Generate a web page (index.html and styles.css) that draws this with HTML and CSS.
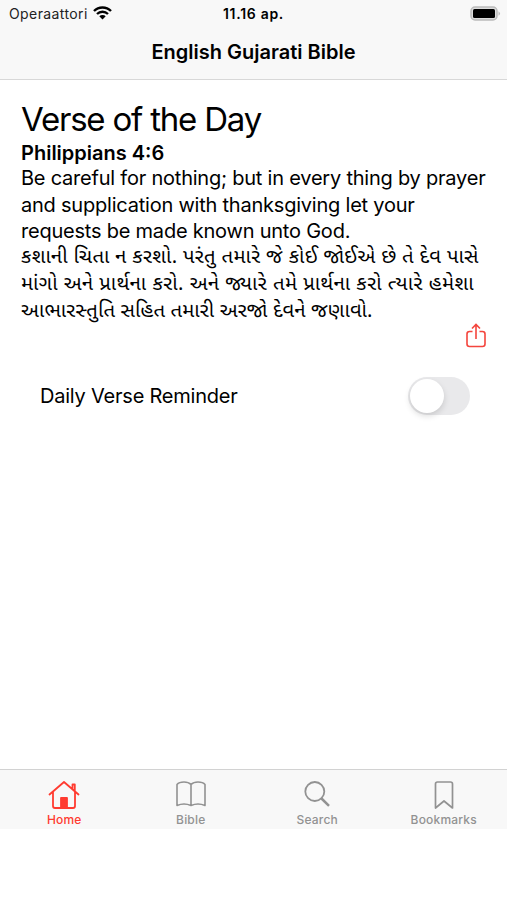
FILE: index.html
```html
<!DOCTYPE html>
<html lang="en">
<head>
  <meta charset="UTF-8">
  <title>English Gujarati Bible</title>
  <link rel="stylesheet" href="styles.css">
</head>
<body>
  <header>
    <div class="status">
      <span class="carrier">Operaattori</span>
      <svg class="wifi" width="19" height="14" viewBox="0 0 19 14">
        <path d="M1 5a12 12 0 0 1 17 0M4 8a8 8 0 0 1 11 0" fill="none" stroke="#000" stroke-width="2.4"/>
        <path d="M6.3 10.2a4.6 4.6 0 0 1 6.4 0L9.500 13.500z"/>
      </svg>
      <span class="time">11.16 ap.</span>
      <svg class="battery" width="31" height="15" viewBox="0 0 31 15">
        <rect x="1" y="1" width="26" height="13" rx="4" fill="#ddd" stroke="#bbb" stroke-width="1.500"/>
        <rect x="3" y="3" width="22" height="9" rx="1.500"/>
        <path d="M28.500 5.200q3 2.300 0 4.600z" fill="#bbb"/>
      </svg>
    </div>
    <h1>English Gujarati Bible</h1>
  </header>

  <main>
    <h2>Verse of the Day</h2>
    <h3>Philippians 4:6</h3>
    <div class="english">
      <p>Be careful for nothing; but in every thing by prayer</p>
      <p>and supplication with thanksgiving let your</p>
      <p>requests be made known unto God.</p>
    </div>
    <div class="gujarati" lang="gu">
      <p>કશાની ચિતા ન કરશો. પરંતુ તમારે જે કોઈ જોઈએ છે તે દેવ પાસે</p>
      <p class="wide">માંગો અને પ્રાર્થના કરો. અને જ્યારે તમે પ્રાર્થના કરો ત્યારે હમેશા</p>
      <p class="tight">આભારસ્તુતિ સહિત તમારી અરજો દેવને જણાવો.</p>
    </div>
    <div class="share">
      <svg width="20" height="25" viewBox="0 0 20 25" fill="none" stroke="#f4453d" stroke-width="1.600">
        <path d="M6.500 8.500H3.500Q1 8.500 1 11V21Q1 23.500 3.500 23.500H16.500Q19 23.500 19 21V11Q19 8.500 16.500 8.500H13.500M10 16V1.500M6 5.500L10 1.500L14 5.500"/>
      </svg>
    </div>
    <div class="reminder">
      <span>Daily Verse Reminder</span>
      <div class="switch"></div>
    </div>
  </main>

  <nav>
    <a class="active">
      <svg width="32" height="30" viewBox="0 0 32 30" fill="none" stroke="#ff3b30" stroke-width="1.800" stroke-linejoin="round" stroke-linecap="round">
        <path d="M1.500 14.500L16 2L30.500 14.500M5 12V26Q5 28 7 28H25Q27 28 27 26V12M24.500 9V4.500H26.800V11"/>
        <path d="M13 27.500V18H19V27.500z" fill="#ff3b30"/>
      </svg>
      <span>Home</span>
    </a>
    <a>
      <svg width="32" height="30" viewBox="0 0 32 30" fill="none" stroke="#929292" stroke-width="1.600" stroke-linejoin="round">
        <path d="M16 4.500Q13.500 2 9 2Q4 2 2 4.500V25.500Q9 22.500 16 25.500Q23 22.500 30 25.500V4.500Q28 2 23 2Q18.500 2 16 4.500V25.500"/>
      </svg>
      <span>Bible</span>
    </a>
    <a>
      <svg width="32" height="30" viewBox="0 0 32 30" fill="none" stroke="#929292" stroke-width="1.800">
        <circle cx="13.800" cy="11.500" r="9.500"/>
        <path d="M20.500 18.500L28 25.800" stroke-width="2.500"/>
      </svg>
      <span>Search</span>
    </a>
    <a>
      <svg width="32" height="30" viewBox="0 0 32 30" fill="none" stroke="#929292" stroke-width="1.700" stroke-linejoin="round">
        <path d="M7.500 4Q7.500 2 9.500 2H22.500Q24.500 2 24.500 4V28L16 21L7.500 28z"/>
      </svg>
      <span>Bookmarks</span>
    </a>
  </nav>
</body>
</html>
```
FILE: styles.css
```css
* {
  box-sizing: border-box;
}
body {
  margin: 0;
  height: 900px;
  display: flex;
  flex-direction: column;
  background: #fff;
  color: #000;
  font-family: Inter, "Noto Sans", sans-serif;
}
header {
  height: 80px;
  background: #f8f8f8;
  border-bottom: 1px solid #d8d8d8;
}
.status {
  height: 27px;
  padding: 0 6px 0 9px;
  display: grid;
  grid-template-columns: 84px 106px 1fr 31px;
  align-items: center;
  font-size: 14px;
}
.carrier {
  color: #222;
  letter-spacing: 0.4px;
}
.wifi {
  margin-top: -2px;
}
.time {
  margin-left: 24px;
  font-weight: 600;
  letter-spacing: 0.7px;
}
.status .battery {
  margin-top: -1px;
}
h1 {
  margin: 0;
  line-height: 51px;
  text-align: center;
  font-size: 20px;
  font-weight: 600;
}
main {
  flex: 1;
  padding: 20px 21px 0;
}
h2 {
  margin: 0;
  height: 41px;
  line-height: 39px;
  font-size: 33px;
  font-weight: 400;
  letter-spacing: -1.2px;
}
h3 {
  margin: 0;
  line-height: 24px;
  font-size: 20px;
  font-weight: 600;
}
p {
  margin: 0;
  white-space: nowrap;
}
.english {
  font-size: 20px;
  line-height: 26.7px;
  letter-spacing: -0.22px;
}
.gujarati {
  font-family: "Noto Sans Gujarati", "Noto Sans", sans-serif;
  font-size: 20.3px;
  line-height: 26.7px;
  letter-spacing: 0.3px;
}
.gujarati .wide {
  letter-spacing: 0.45px;
}
.gujarati .tight {
  letter-spacing: 0.12px;
}
.share {
  height: 27px;
  margin-top: -2px;
  display: flex;
  justify-content: flex-end;
}
.reminder {
  margin: 27px 16px 0 19px;
  display: flex;
  align-items: center;
  justify-content: space-between;
  font-size: 20px;
  letter-spacing: -0.22px;
}
.switch {
  width: 62px;
  height: 38px;
  padding: 2px;
  border-radius: 19px;
  background: #e9e9eb;
}
.switch::before {
  content: "";
  display: block;
  width: 34px;
  height: 34px;
  border-radius: 50%;
  background: #fff;
  box-shadow: 0 3px 6px rgba(0, 0, 0, 0.14);
}
nav {
  height: 60px;
  margin-bottom: 71px;
  padding: 10px 0 0 1px;
  display: grid;
  grid-template-columns: repeat(4, 1fr);
  background: #f8f8f8;
  border-top: 1px solid #d2d2d2;
}
nav a {
  display: flex;
  flex-direction: column;
  align-items: center;
  gap: 2px;
  color: #929292;
  font-size: 12px;
  font-weight: 500;
  letter-spacing: 0.2px;
}
nav .active {
  color: #ff3b30;
}
```
